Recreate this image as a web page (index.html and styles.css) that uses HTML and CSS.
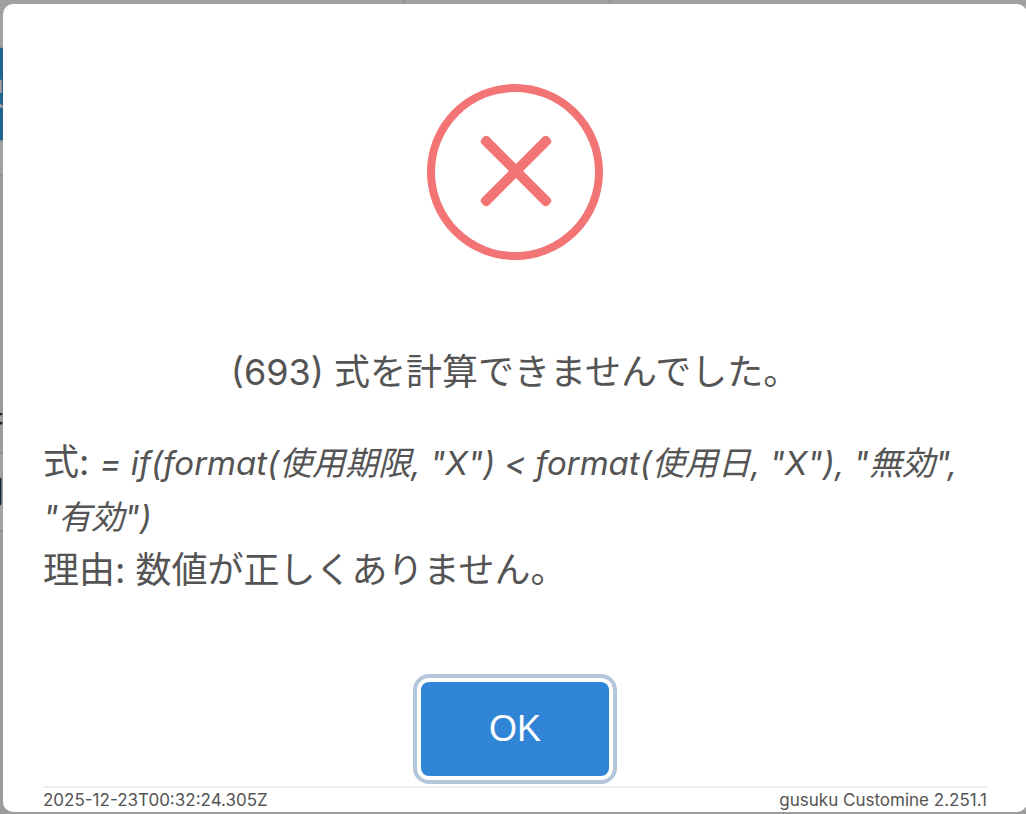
FILE: index.html
```html
<!DOCTYPE html>
<html lang="ja">
<head>
    <meta charset="UTF-8">
    <title>gusuku Customine</title>
    <link rel="stylesheet" href="styles.css">
</head>
<body>
    <div class="page" aria-hidden="true">
        <div class="top_row"><i></i><i></i></div>
        <div class="tab_row"></div>
        <div class="active_row">択</div>
        <div class="sub_row"></div>
        <div class="list_row">果</div>
        <div class="item_row">円</div>
    </div>
    <div class="modal" role="dialog" aria-labelledby="title">
        <svg class="icon" viewBox="0 0 176 176" aria-hidden="true">
            <circle cx="88" cy="88" r="84" fill="none" stroke="#f27474" stroke-width="8"/>
            <rect x="42" y="82" width="94" height="10" rx="4" fill="#f27474" transform="rotate(45 89 87)"/>
            <rect x="42" y="82" width="94" height="10" rx="4" fill="#f27474" transform="rotate(-45 89 87)"/>
        </svg>
        <div class="title" id="title">(693) 式を計算できませんでした。</div>
        <div class="content">
            <p>式: <em>= if(format(使用期限, "X") &lt; format(使用日, "X"), "無効", "有効")</em></p>
            <p>理由: 数値が正しくありません。</p>
        </div>
        <button type="button" class="confirm">OK</button>
        <div class="footer">
            <span>2025-12-23T00:32:24.305Z</span>
            <span>gusuku Customine 2.251.1</span>
        </div>
    </div>
</body>
</html>
```
FILE: styles.css
```css
*{
    margin:0;
    padding:0;
    box-sizing: border-box;
}
body{
    min-height: 100vh;
    display: grid;
    background: #9c9c9c;
    font-family: Inter, "Noto Sans CJK JP", sans-serif;
    color:#545454;
    overflow: hidden;
}
.page,.modal{
    grid-area: 1 / 1;
}
/* page under the overlay */
.page{
    font-size: 32px;
    color:#222;
    text-indent: -28px;
}
.top_row{
    height:13px;
    display: flex;
    gap:203px;
    padding-left: 402px;
    background: #a1a1a1;
    border-bottom: 1px solid #949494;
}
.top_row i{
    width:3px;
    height:5px;
    background: #8f9693;
    transform: skewX(-25deg);
}
.tab_row{
    height:35px;
    background: #a1a1a1;
    border-bottom: 2px solid #949494;
}
.active_row{
    height:92px;
    line-height: 92px;
    background: #1f648f;
    color:#a1a1a1;
}
.sub_row{
    height:36px;
    background: #a1a1a1;
    border-top: 2px solid #949494;
    border-bottom: 2px solid #949494;
}
.list_row{
    height:278px;
    padding-top: 212px;
    line-height: 48px;
    border-bottom: 2px solid #929292;
}
.item_row{
    height:78px;
    line-height: 76px;
    background: #a1a1a1;
    border-bottom: 2px solid #929292;
}
.modal{
    position: relative;
    display: flex;
    flex-direction: column;
    align-items: center;
    margin:4px -1px 2px 3px;
    padding:80px 40px 0;
    background: #fff;
    border-radius: 10px;
}
.icon{
    width:176px;
    height:176px;
    margin-bottom: 85px;
}
.title{
    font-size: 36px;
    line-height: 54px;
    margin-bottom: 36px;
    text-align: center;
}
.content{
    width:100%;
    font-size: 36px;
    line-height: 54px;
}
.content em{
    font-size: 33px;
    line-height: 32px;
    word-break: keep-all;
}
.confirm{
    width:188px;
    height:94px;
    margin:85px 0 10px;
    border:0;
    border-radius: 8px;
    background: #3085d6;
    color:#fff;
    font-family: "Liberation Sans", sans-serif;
    font-size: 36px;
    box-shadow: 0 0 0 4px #fff, 0 0 0 8px #b4c6da;
}
.footer{
    width:100%;
    display: flex;
    justify-content: space-between;
    border-top: 2px solid #eee;
    font-size: 17px;
    line-height: 24px;
}
```
